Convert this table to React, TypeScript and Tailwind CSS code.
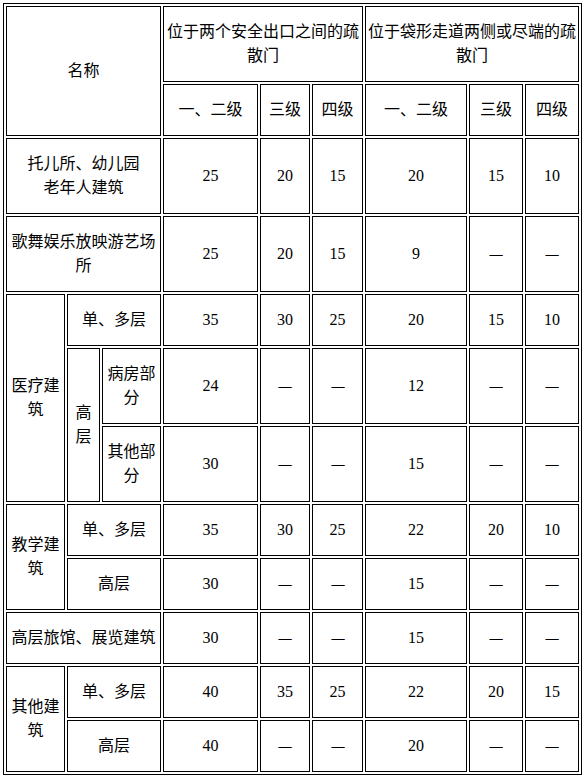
import React from 'react'

const cell = "border border-black px-[1px] py-[13px] text-center align-middle"
const D = "—"

interface RowProp {
  vals: string[];
}

// six number cells for one row
const Nums: React.FC<RowProp> = ({ vals }) => {
  return (
    <>
      {vals.map((v, i) => (
        <td key={i} className={cell}>
          {v === D ? <span className="inline-block scale-x-[0.82]">{v}</span> : v}
        </td>
      ))}
    </>
  )
}

const App = () => {
  return (
    <div className="bg-white w-[585px] h-[777px] pt-[3px] pl-[3px]">
      <table
        className="table-fixed border-separate border-spacing-[2px] border border-black w-[579px] text-[16px] leading-[24px] text-black"
        style={{ fontFamily: '"Liberation Serif", "Noto Sans CJK SC", serif' }}
      >
        <colgroup>
          <col className="w-[59px]" />
          <col className="w-[33px]" />
          <col className="w-[59px]" />
          <col className="w-[95px]" />
          <col className="w-[50px]" />
          <col className="w-[51px]" />
          <col className="w-[102px]" />
          <col className="w-[54px]" />
          <col className="w-[54px]" />
        </colgroup>
        <tbody>
          <tr>
            <td className={cell} colSpan={3} rowSpan={2}>名称</td>
            <td className={cell} colSpan={3}>位于两个安全出口之间的疏<br />散门</td>
            <td className={cell} colSpan={3}>位于袋形走道两侧或尽端的疏<br />散门</td>
          </tr>
          <tr>
            <td className={cell}>一、二级</td>
            <td className={cell}>三级</td>
            <td className={cell}>四级</td>
            <td className={cell}>一、二级</td>
            <td className={cell}>三级</td>
            <td className={cell}>四级</td>
          </tr>
          <tr>
            <td className={cell} colSpan={3}>托儿所、幼儿园<br />老年人建筑</td>
            <Nums vals={["25", "20", "15", "20", "15", "10"]} />
          </tr>
          <tr>
            <td className={cell} colSpan={3}>歌舞娱乐放映游艺场所</td>
            <Nums vals={["25", "20", "15", "9", D, D]} />
          </tr>
          <tr>
            <td className={cell} rowSpan={3}>医疗建筑</td>
            <td className={cell} colSpan={2}>单、多层</td>
            <Nums vals={["35", "30", "25", "20", "15", "10"]} />
          </tr>
          <tr>
            <td className={cell} rowSpan={2}>高层</td>
            <td className={cell}>病房部分</td>
            <Nums vals={["24", D, D, "12", D, D]} />
          </tr>
          <tr>
            <td className={cell}>其他部分</td>
            <Nums vals={["30", D, D, "15", D, D]} />
          </tr>
          <tr>
            <td className={cell} rowSpan={2}>教学建筑</td>
            <td className={cell} colSpan={2}>单、多层</td>
            <Nums vals={["35", "30", "25", "22", "20", "10"]} />
          </tr>
          <tr>
            <td className={cell} colSpan={2}>高层</td>
            <Nums vals={["30", D, D, "15", D, D]} />
          </tr>
          <tr>
            <td className={cell} colSpan={3}>高层旅馆、展览建筑</td>
            <Nums vals={["30", D, D, "15", D, D]} />
          </tr>
          <tr>
            <td className={cell} rowSpan={2}>其他建筑</td>
            <td className={cell} colSpan={2}>单、多层</td>
            <Nums vals={["40", "35", "25", "22", "20", "15"]} />
          </tr>
          <tr>
            <td className={cell} colSpan={2}>高层</td>
            <Nums vals={["40", D, D, "20", D, D]} />
          </tr>
        </tbody>
      </table>
    </div>
  )
}

export default App
